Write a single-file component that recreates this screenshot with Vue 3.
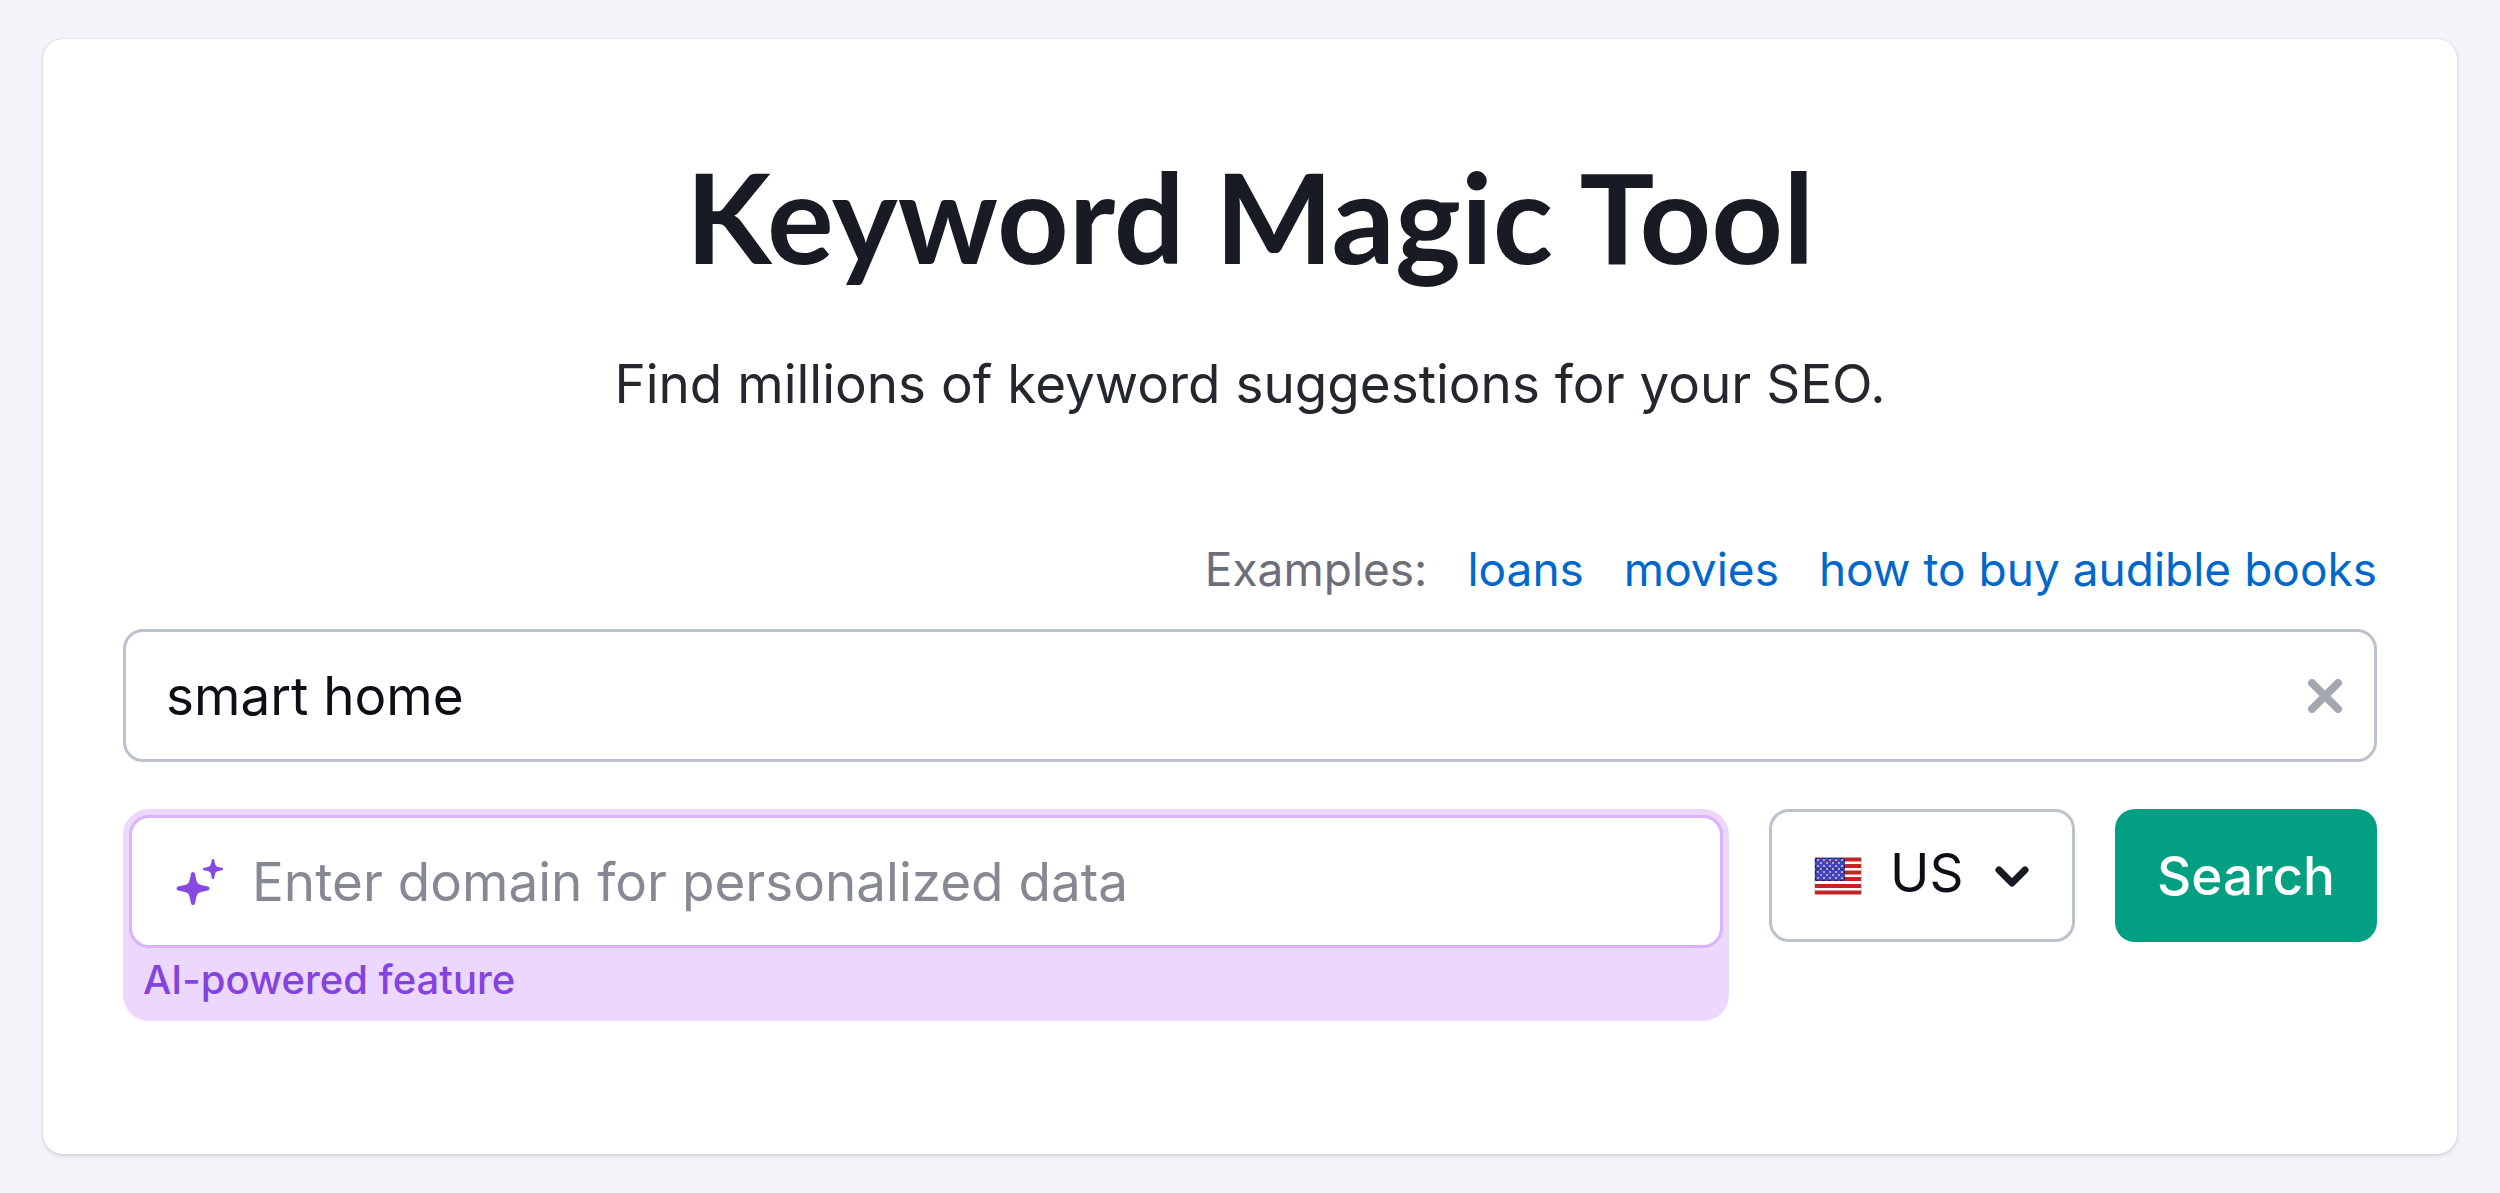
<script setup>
import { ref } from 'vue'

const keyword = ref('smart home')
const domain = ref('')
const country = ref('US')
const countries = ['US', 'UK', 'CA', 'AU', 'DE']
const examples = ['loans', 'movies', 'how to buy audible books']

// four-pointed star drawn around the origin, used twice in the AI icon
const sparkle =
  'M0-16.5Q1.5-16.5 2-15C3-10 3.2-7.2 5-5C7.2-3.2 10-3 15-2Q16.5-1.5 16.5 0' +
  'Q16.5 1.5 15 2C10 3 7.2 3.2 5 5C3.2 7.2 3 10 2 15Q1.5 16.5 0 16.5' +
  'Q-1.5 16.5-2 15C-3 10-3.2 7.2-5 5C-7.2 3.2-10 3-15 2Q-16.5 1.5-16.5 0' +
  'Q-16.5-1.5-15-2C-10-3-7.2-3.2-5-5C-3.2-7.2-3-10-2-15Q-1.5-16.5 0-16.5Z'

// small stars in the flag's canton
const stars = []
for (let row = 0; row < 7; row++) {
  for (let col = 0; col < (row % 2 ? 4 : 5); col++) {
    stars.push({ x: 4 + col * 6 + (row % 2 ? 3 : 0), y: 3 + row * 3 })
  }
}
</script>

<template>
  <main class="page">
    <form class="card" @submit.prevent>
      <h1 class="title">Keyword Magic Tool</h1>
      <p class="subtitle">Find millions of keyword suggestions for your SEO.</p>

      <div class="examples">
        <span>Examples:</span>
        <a v-for="item in examples" :key="item" href="#" @click.prevent="keyword = item">{{ item }}</a>
      </div>

      <div class="field keyword-field">
        <input v-model="keyword" class="text-input" type="text" aria-label="Keyword" />
        <button class="clear-btn" type="button" aria-label="Clear" @click="keyword = ''">
          <svg width="34" height="34" viewBox="0 0 34 34">
            <path d="M4 4 30 30M30 4 4 30" fill="none" stroke="#a5a8b1" stroke-width="8" stroke-linecap="round" />
          </svg>
        </button>
      </div>

      <div class="row">
        <div class="ai-box">
          <div class="field ai-field">
            <svg class="sparkles" width="48" height="48" viewBox="0 0 48 48" fill="#8649e1">
              <path transform="translate(17 30.5)" :d="sparkle" />
              <path transform="translate(37 11) scale(0.61)" :d="sparkle" />
            </svg>
            <input
              id="domain"
              v-model="domain"
              class="text-input"
              type="text"
              placeholder="Enter domain for personalized data"
            />
          </div>
          <label class="ai-label" for="domain">AI-powered feature</label>
        </div>

        <div class="field country-field">
          <svg class="flag" width="48" height="38" viewBox="0 0 48 38">
            <rect width="48" height="38" rx="2" fill="#d5d6de" />
            <rect x="1" width="46" height="38" fill="#fff" />
            <path
              d="M1 2.500H47M1 9H47M1 15.500H47M1 22H47M1 29H47M1 35.500H47"
              stroke="#c42424"
              stroke-width="4"
            />
            <rect x="1" y="1" width="30" height="23" fill="#4444b5" />
            <path
              d="M2 1.500H30M2 12H30M2 23.500H30M1.500 2V24M30.500 2V24"
              stroke="#1d1f4a"
              stroke-width="1"
              stroke-dasharray="3 3"
            />
            <circle v-for="(s, i) in stars" :key="i" :cx="s.x" :cy="s.y" r="1" fill="#c9cbea" />
          </svg>
          <select v-model="country" class="country-select" aria-label="Country">
            <option v-for="c in countries" :key="c">{{ c }}</option>
          </select>
          <svg class="chevron" width="36" height="24" viewBox="0 0 36 24">
            <path
              d="M5 6 18 19 31 6"
              fill="none"
              stroke="#171a22"
              stroke-width="7"
              stroke-linecap="round"
              stroke-linejoin="round"
            />
          </svg>
        </div>

        <button class="search-btn" type="submit">Search</button>
      </div>
    </form>
  </main>
</template>

<style>
body {
  margin: 0;
  background: #f3f4f9;
}
</style>

<style scoped>
.page {
  padding: 39px 43px;
  font-family: Inter, "Liberation Sans", sans-serif;
  color: #0d0f17;
}

.card {
  display: flex;
  flex-direction: column;
  padding: 103px 80px 133px;
  background: #ffffff;
  border-radius: 20px;
  box-shadow: 0 0 2px rgba(25, 27, 35, 0.16), 0 2px 4px rgba(25, 27, 35, 0.12);
}

.title {
  margin: 0;
  text-align: center;
  font-family: Lato, Inter, sans-serif;
  font-size: 125px;
  line-height: 148px;
  font-weight: 700;
  color: #181b23;
}

.subtitle {
  margin: 62px 0 0;
  text-align: center;
  font-size: 53px;
  line-height: 64px;
  color: #25272f;
}

.examples {
  display: flex;
  justify-content: flex-end;
  gap: 40px;
  margin: 125px 0 32px;
  font-size: 46px;
  line-height: 56px;
  color: #6c6e79;
}

.examples a {
  color: #0068cd;
  text-decoration: none;
}

.field {
  display: flex;
  align-items: center;
  box-sizing: border-box;
  height: 133px;
  border: 3px solid #bcc2cd;
  border-radius: 20px;
  background: #ffffff;
}

.keyword-field {
  padding: 0 32px 0 40px;
}

.text-input {
  flex: 1;
  min-width: 0;
  padding: 0;
  border: none;
  outline: none;
  background: transparent;
  font-family: inherit;
  font-size: 53px;
  line-height: 64px;
  color: inherit;
}

.text-input::placeholder {
  color: #868994;
  opacity: 1;
}

.clear-btn {
  display: flex;
  padding: 0;
  border: none;
  background: transparent;
  cursor: pointer;
}

.row {
  display: flex;
  align-items: flex-start;
  gap: 40px;
  margin-top: 47px;
}

.ai-box {
  flex: 1;
  min-width: 0;
  padding: 6px 6px 17px;
  border-radius: 26px;
  background: #ecd8ff;
}

.ai-field {
  gap: 28px;
  padding: 0 40px 0 44px;
  border-color: #d9b3ff;
}

.ai-label {
  display: block;
  margin: 8px 14px 0;
  font-size: 40px;
  line-height: 48px;
  font-weight: 500;
  color: #8443df;
}

.country-field {
  padding: 0 42px;
}

.country-select {
  appearance: none;
  margin: 0 28px;
  padding: 0 0 6px;
  border: none;
  outline: none;
  background: transparent;
  font-family: inherit;
  font-size: 53px;
  line-height: 64px;
  color: inherit;
  cursor: pointer;
}

.chevron {
  pointer-events: none;
}

.search-btn {
  height: 133px;
  padding: 0 42px;
  border: none;
  border-radius: 20px;
  background: #039f82;
  color: #ffffff;
  font-family: inherit;
  font-size: 53px;
  line-height: 64px;
  font-weight: 500;
  cursor: pointer;
}
</style>
